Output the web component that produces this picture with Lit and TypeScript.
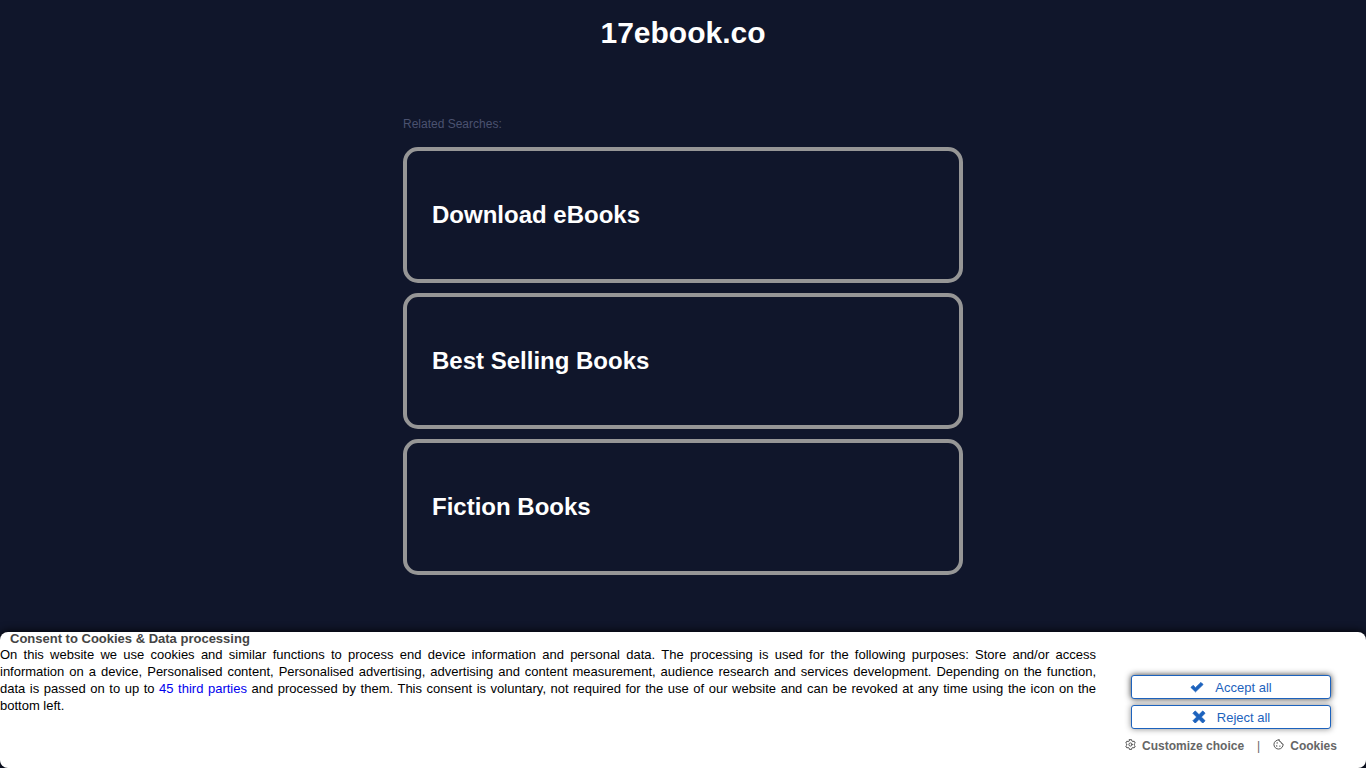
import { LitElement, html, css, svg } from "lit";
import { customElement } from "lit/decorators.js";

const check = svg`<path d="M1 7.400 L3 5.400 L5.500 7.800 L11 2.500 L13 4.500 L5.500 11.800 Z" stroke-width="1" stroke-linejoin="round"/>`;
const cross = svg`<path d="M3.3 1 L7 4.7 L10.7 1 L13 3.3 L9.3 7 L13 10.7 L10.7 13 L7 9.3 L3.3 13 L1 10.7 L4.7 7 L1 3.3 Z" stroke-width="1" stroke-linejoin="round"/>`;
const gear = svg`<path d="M9.600 1.500h4.800l.7 3 1.900 1.100 2.900-.9 2.400 4.200-2.200 2.100v2.200l2.200 2.100-2.400 4.200-2.900-.9-1.900 1.100-.7 3H9.600l-.7-3-1.900-1.100-2.900.9-2.400-4.200 2.200-2.100v-2.200L1.700 8.900l2.400-4.200 2.900.9 1.900-1.100z"/><circle cx="12" cy="12" r="3.500"/>`;
const cookie = svg`<path d="M13 2a4.500 4.500 0 0 0 4.500 4.500 4.500 4.500 0 0 0 4.500 4.500A10 10 0 1 1 13 2z"/><path d="M9 8.500h.1M8 15h.1M15 15.500h.1" stroke-width="3"/>`;

@customElement("app-root")
export class AppRoot extends LitElement {
  static styles = css`
    :host {
      display: flex;
      flex-direction: column;
      min-height: 100vh;
      background: #10162b;
      font-family: "Liberation Sans", Arial, sans-serif;
    }
    * {
      box-sizing: border-box;
    }
    a {
      text-decoration: none;
    }
    .title {
      margin: 0;
      padding-top: 15px;
      font-size: 30px;
      line-height: 36px;
      text-align: center;
      color: #fff;
    }
    .searches {
      flex: 1;
      width: 100%;
      max-width: 560px;
      margin: 0 auto;
      padding: 66px 0 24px;
    }
    .caption {
      margin: 0 0 16px;
      font-size: 12px;
      line-height: 14px;
      font-weight: normal;
      color: #4b5270;
    }
    .list {
      display: flex;
      flex-direction: column;
      gap: 10px;
      margin: 0;
      padding: 0;
      list-style: none;
    }
    .card {
      display: block;
      padding: 50px 25px;
      border: 4px solid #969696;
      border-radius: 15px;
      font-size: 24px;
      line-height: 28px;
      font-weight: bold;
      color: #fff;
    }
    .banner {
      display: flex;
      min-height: 136px;
      border-radius: 8px;
      background: #fff;
      box-shadow: 0 0 10px #000;
      font-size: 13px;
      color: #000;
    }
    .copy {
      flex: 1;
    }
    .heading {
      margin: 0;
      padding-left: 10px;
      font-size: 13px;
      line-height: 14px;
      color: #444;
    }
    .text {
      margin: 0;
      line-height: 17px;
      text-align: justify;
    }
    .line {
      display: block;
      text-align-last: justify;
    }
    .text a {
      color: #00e;
    }
    .actions {
      display: flex;
      flex-direction: column;
      align-items: center;
      gap: 6px;
      width: 270px;
      padding-top: 43px;
    }
    .choice {
      display: flex;
      align-items: center;
      justify-content: center;
      gap: 11px;
      width: 200px;
      height: 24px;
      padding: 0;
      border: 1px solid #1c62bd;
      border-radius: 3px;
      background: #fff;
      box-shadow: 0 0 6px #333;
      font: 13px "Liberation Sans", Arial, sans-serif;
      color: #1c62bd;
      cursor: pointer;
    }
    .choice.quiet {
      box-shadow: 0 0 6px #888;
    }
    .mark {
      width: 14px;
      height: 14px;
      fill: currentColor;
      stroke: currentColor;
    }
    .links {
      display: flex;
      gap: 13px;
      padding-top: 4px;
      font-size: 12px;
      line-height: 14px;
      color: #666;
    }
    .links a {
      display: flex;
      gap: 6px;
      font-weight: bold;
      color: #666;
    }
    .glyph {
      width: 11px;
      height: 11px;
      fill: none;
      stroke: #444;
      stroke-width: 2;
      stroke-linecap: round;
      stroke-linejoin: round;
    }
  `;

  private searches = ["Download eBooks", "Best Selling Books", "Fiction Books"];

  render() {
    return html`
      <h1 class="title">17ebook.co</h1>
      <main class="searches">
        <h2 class="caption">Related Searches:</h2>
        <ul class="list">
          ${this.searches.map((s) => html`<li><a class="card" href="#">${s}</a></li>`)}
        </ul>
      </main>
      <section class="banner" aria-labelledby="consent">
        <div class="copy">
          <h2 class="heading" id="consent">Consent to Cookies &amp; Data processing</h2>
          <p class="text">
            <span class="line">On this website we use cookies and similar functions to process end device
              information and personal data. The processing is used for the following purposes: Store
              and/or access</span>
            <span class="line">information on a device, Personalised content, Personalised advertising,
              advertising and content measurement, audience research and services development. Depending
              on the function,</span>
            <span class="line">data is passed on to up to <a href="#">45 third parties</a> and processed
              by them. This consent is voluntary, not required for the use of our website and can be
              revoked at any time using the icon on the</span>
            bottom left.
          </p>
        </div>
        <div class="actions">
          <button class="choice" type="button">
            <svg class="mark" viewBox="0 0 14 14" aria-hidden="true">${check}</svg>Accept all
          </button>
          <button class="choice quiet" type="button">
            <svg class="mark" viewBox="0 0 14 14" aria-hidden="true">${cross}</svg>Reject all
          </button>
          <div class="links">
            <a href="#"><svg class="glyph" viewBox="0 0 24 24" aria-hidden="true">${gear}</svg>Customize choice</a>
            <span>|</span>
            <a href="#"><svg class="glyph" viewBox="0 0 24 24" aria-hidden="true">${cookie}</svg>Cookies</a>
          </div>
        </div>
      </section>
    `;
  }
}
